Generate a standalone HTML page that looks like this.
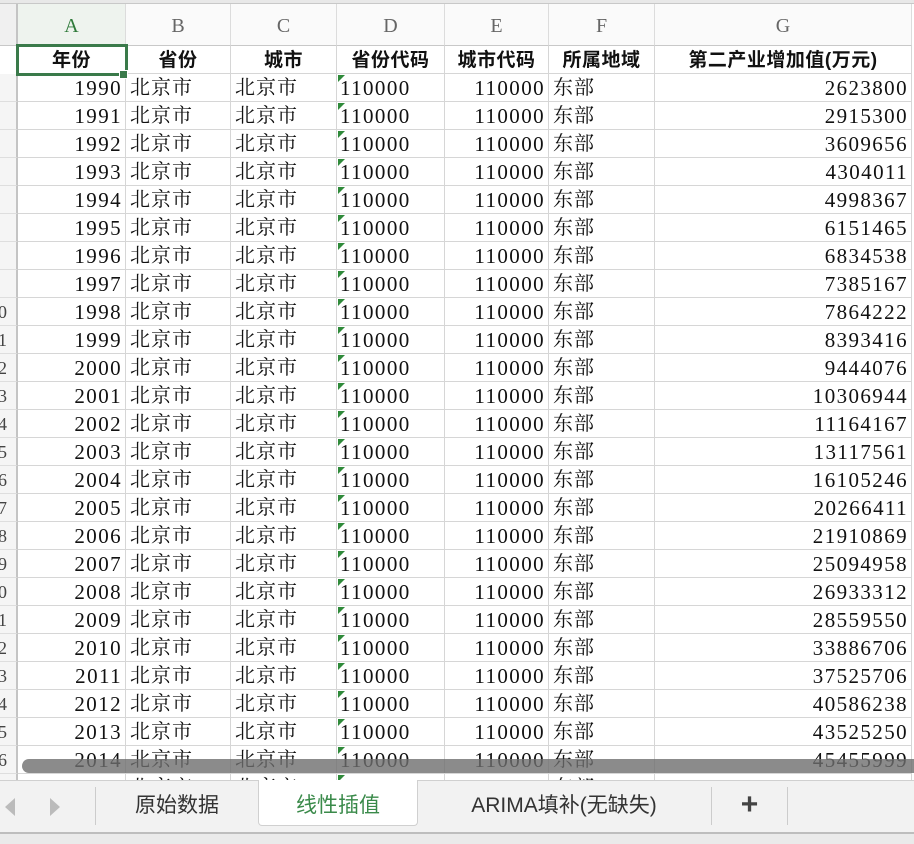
<!DOCTYPE html>
<html><head><meta charset="utf-8">
<style>
*{margin:0;padding:0;box-sizing:border-box}
body{width:914px;height:844px;overflow:hidden;background:#fff;position:relative;font-family:"Liberation Serif","Noto Serif CJK SC",serif}
.c{position:absolute;height:28px;line-height:29px;font-size:21px;color:#111;white-space:nowrap;overflow:hidden;border-right:1px solid #d6d6d6;border-bottom:1px solid #d6d6d6;letter-spacing:1.4px}
.r{text-align:right;padding-right:3px}
.l{text-align:left;padding-left:4px;font-family:"Liberation Serif","Noto Serif CJK SC",serif;font-size:20px;letter-spacing:1px}
.h{position:absolute;top:4px;height:42px;line-height:44px;text-align:center;color:#666;font-size:20px;border-right:1px solid #dcdcdc;border-bottom:1px solid #c8c8c8;background:#fafafa}
.b{font-family:"Liberation Sans","Noto Sans CJK SC",sans-serif;font-weight:bold;text-align:center;font-size:19px;letter-spacing:0.5px}
.tri{position:absolute;width:0;height:0;border-top:7px solid #2f8a3a;border-right:7px solid transparent}
.rh{position:absolute;left:0;width:18px;height:28px;background:#f5f5f5;border-right:2px solid #c4c4c4;border-bottom:1px solid #dedede;overflow:hidden;font-size:18px;line-height:28px;color:#444}
.rh span{position:absolute;right:9px}
</style></head><body>
<div style="position:absolute;left:0;top:0;width:914px;height:4px;background:#e8e8e8;border-bottom:1px solid #c8c8c8"></div>
<div style="position:absolute;left:0;top:4px;width:18px;height:42px;background:#f0f0f0;border-right:2px solid #c4c4c4;border-bottom:1px solid #c8c8c8"></div>
<div id="g"></div>
<script>
var cols=[[18,108,'A'],[126,105,'B'],[231,106,'C'],[337,108,'D'],[445,104,'E'],[549,106,'F'],[655,257,'G']];
var H=['年份','省份','城市','省份代码','城市代码','所属地域','第二产业增加值(万元)'];
var V=[2623800,2915300,3609656,4304011,4998367,6151465,6834538,7385167,7864222,8393416,9444076,10306944,11164167,13117561,16105246,20266411,21910869,25094958,26933312,28559550,33886706,37525706,40586238,43525250,45455999,47000000];
var s='';
cols.forEach(function(c,i){s+='<div class="h" style="left:'+c[0]+'px;width:'+c[1]+'px;'+(i==0?'color:#2f7a3a;background:#eef3ee':'')+'">'+c[2]+'</div>';
s+='<div class="c b" style="top:46px;left:'+c[0]+'px;width:'+c[1]+'px">'+H[i]+'</div>';});
for(var k=0;k<26;k++){var y=74+28*k,n=k+2;
s+='<div class="rh" style="top:'+y+'px"><span>'+(n>=10?n:'')+'</span></div>';
var row=[[1990+k,'r'],['北京市','l'],['北京市','l'],['110000','r0'],['110000','r'],['东部','l'],[V[k],'r']];
cols.forEach(function(c,i){var cl=row[i][1];var st='';if(cl=='r0'){cl='';st='padding-left:3px;text-align:left;';}
s+='<div class="c '+cl+'" style="top:'+y+'px;left:'+c[0]+'px;width:'+c[1]+'px;'+st+'">'+row[i][0]+'</div>';});
s+='<div class="tri" style="left:338px;top:'+(y+1)+'px"></div>';}
document.getElementById('g').innerHTML=s;
</script>
<div style="position:absolute;left:16px;top:44px;width:112px;height:32px;border:3px solid #3a7a4a"></div>
<div style="position:absolute;left:119px;top:70px;width:9px;height:9px;background:#3a7a4a;border:1px solid #fff"></div>
<div style="position:absolute;left:22px;top:759px;width:900px;height:14px;border-radius:7px;background:rgba(110,110,110,.8)"></div>
<div style="position:absolute;left:0;top:780px;width:914px;height:52px;background:#f2f2f2;border-top:1px solid #d0d0d0;font-family:'Liberation Sans','Noto Sans CJK SC',sans-serif">
 <div style="position:absolute;left:5px;top:17px;width:0;height:0;border-top:9px solid transparent;border-bottom:9px solid transparent;border-right:10px solid #bbb"></div>
 <div style="position:absolute;left:50px;top:17px;width:0;height:0;border-top:9px solid transparent;border-bottom:9px solid transparent;border-left:10px solid #bbb"></div>
 <div style="position:absolute;left:95px;top:6px;width:1px;height:38px;background:#ccc"></div>
 <div style="position:absolute;left:96px;top:0;width:162px;height:50px;line-height:50px;text-align:center;font-size:21px;color:#333">原始数据</div>
 <div style="position:absolute;left:258px;top:-1px;width:160px;height:46px;line-height:52px;text-align:center;font-size:21px;color:#3a8a4a;background:#fff;border:1px solid #d0d0d0;border-top:none;border-radius:0 0 4px 4px">线性插值</div>
 <div style="position:absolute;left:418px;top:0;width:292px;height:50px;line-height:50px;text-align:center;font-size:21px;color:#333">ARIMA填补(无缺失)</div>
 <div style="position:absolute;left:711px;top:6px;width:1px;height:38px;background:#ccc"></div>
 <div style="position:absolute;left:712px;top:0;width:75px;height:50px;line-height:48px;text-align:center;font-size:30px;font-weight:bold;color:#444">+</div>
 <div style="position:absolute;left:787px;top:6px;width:1px;height:38px;background:#ccc"></div>
</div>
<div style="position:absolute;left:0;top:832px;width:914px;height:12px;background:#eaeaea;border-top:2px solid #bdbdbd"></div>
</body></html>
